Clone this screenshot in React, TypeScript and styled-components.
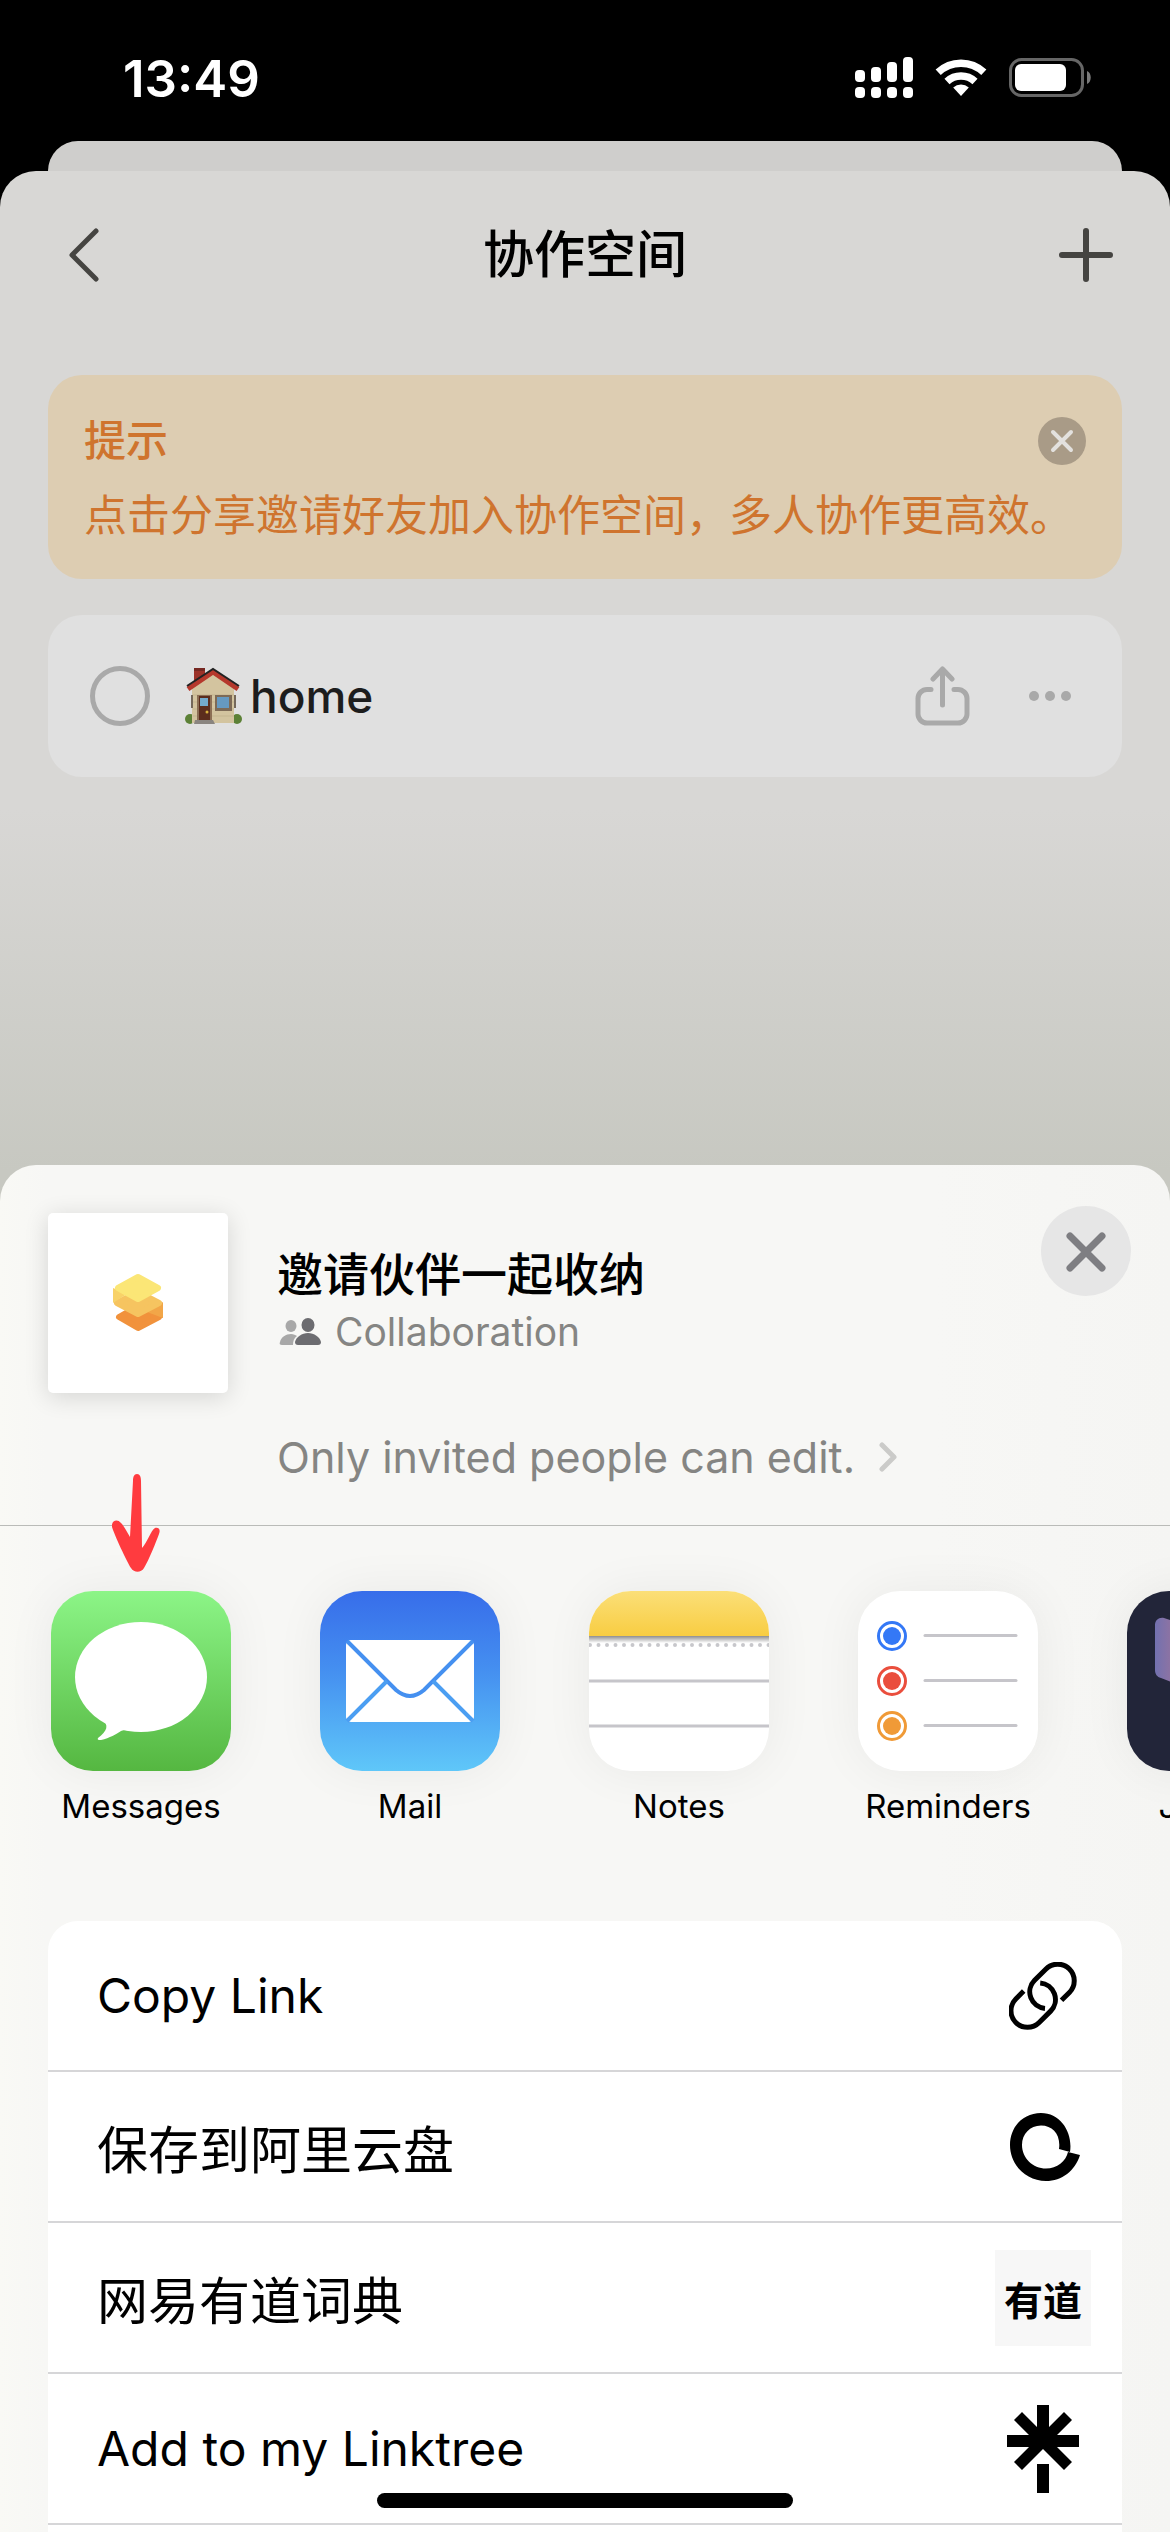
import React from 'react';
import styled, {createGlobalStyle} from "styled-components";

const App = () => {
    return (
        <>
            <GlobalStyle/>
            <Screen>
                <StatusBar>
                    <Time>13:49</Time>
                    <StatusIcons>
                        <SignalIcon/>
                        <WifiIcon/>
                        <BatteryIcon/>
                    </StatusIcons>
                </StatusBar>
                <BackCard/>
                <Workspace>
                    <Header>
                        <IconButton aria-label="Back">
                            <svg width="60" height="60" viewBox="0 0 60 60" fill="none" stroke="#454441" strokeWidth="5"
                                 strokeLinecap="round" strokeLinejoin="round">
                                <path d="M42 6 18 30l24 24"/>
                            </svg>
                        </IconButton>
                        <HeaderTitle>协作空间</HeaderTitle>
                        <IconButton aria-label="Add">
                            <svg width="60" height="60" viewBox="0 0 60 60" fill="none" stroke="#454441" strokeWidth="6"
                                 strokeLinecap="round">
                                <path d="M30 6v48M6 30h48"/>
                            </svg>
                        </IconButton>
                    </Header>
                    <Tip>
                        <TipTop>
                            <TipTitle>提示</TipTitle>
                            <TipClose aria-label="Close tip">
                                <svg width="48" height="48" viewBox="0 0 48 48" fill="none" stroke="#e3e1de"
                                     strokeWidth="4" strokeLinecap="round">
                                    <path d="m15 15 18 18M33 15 15 33"/>
                                </svg>
                            </TipClose>
                        </TipTop>
                        <TipText>点击分享邀请好友加入协作空间，多人协作更高效。</TipText>
                    </Tip>
                    <SpaceRow>
                        <SpaceLabel>
                            <SpaceCheck type="checkbox"/>
                            <HouseIcon/>
                            <span>home</span>
                        </SpaceLabel>
                        <SpaceActions>
                            <IconButton aria-label="Share">
                                <ShareIcon/>
                            </IconButton>
                            <IconButton aria-label="More">
                                <svg width="60" height="60" viewBox="0 0 60 60" fill="#a9a9a9">
                                    <circle cx="14" cy="30" r="5"/>
                                    <circle cx="30" cy="30" r="5"/>
                                    <circle cx="46" cy="30" r="5"/>
                                </svg>
                            </IconButton>
                        </SpaceActions>
                    </SpaceRow>
                </Workspace>

                <Sheet>
                    <SheetHeader>
                        <Thumb>
                            <LogoIcon/>
                        </Thumb>
                        <SheetInfo>
                            <SheetTitle>邀请伙伴一起收纳</SheetTitle>
                            <SheetSub>
                                <PeopleIcon/>
                                Collaboration
                            </SheetSub>
                            <PermissionButton>
                                Only invited people can edit.
                                <svg width="18" height="32" viewBox="0 0 18 32" fill="none" stroke="#cbcbc9"
                                     strokeWidth="5" strokeLinecap="round" strokeLinejoin="round">
                                    <path d="m3 4 12 12L3 28"/>
                                </svg>
                            </PermissionButton>
                        </SheetInfo>
                        <SheetClose aria-label="Close">
                            <svg width="90" height="90" viewBox="0 0 90 90" fill="none" stroke="#7e7e82" strokeWidth="7"
                                 strokeLinecap="round">
                                <path d="m29 30 32 32M61 30 29 62"/>
                            </svg>
                        </SheetClose>
                    </SheetHeader>

                    <Apps>
                        <AppItem>
                            <Pointer/>
                            <AppIcon $bg="linear-gradient(#8cf587, #55b741)"><MessagesArt/></AppIcon>
                            Messages
                        </AppItem>
                        <AppItem>
                            <AppIcon $bg="linear-gradient(#376dea, #4590f0 45%, #5fc7f9)"><MailArt/></AppIcon>
                            Mail
                        </AppItem>
                        <AppItem>
                            <AppIcon $bg="#fff"><NotesArt/></AppIcon>
                            Notes
                        </AppItem>
                        <AppItem>
                            <AppIcon $bg="#fff"><RemindersArt/></AppIcon>
                            Reminders
                        </AppItem>
                        <AppItem>
                            <AppIcon $bg="#222539"><JournalArt/></AppIcon>
                            Journal
                        </AppItem>
                    </Apps>

                    <Actions>
                        <ActionRow>
                            Copy Link
                            <ActionIcon>
                                <svg width="68" height="68" viewBox="0 0 68 68" fill="none" stroke="#000"
                                     strokeWidth="5">
                                    <path d="M52.5 38.3 60.4 30.4A16.5 16.5 0 0 0 37 7L25.6 18.3A16.5 16.5 0 0 0 36 46.4"/>
                                    <path d="M14.7 29.1 6.8 37A16.5 16.5 0 0 0 30.2 60.4L41.6 49.1A16.5 16.5 0 0 0 31.2 21"/>
                                </svg>
                            </ActionIcon>
                        </ActionRow>
                        <ActionRow $chinese>
                            保存到阿里云盘
                            <ActionIcon>
                                <svg width="72" height="72" viewBox="-1 0 72 72" overflow="visible">
                                    <path
                                        d="M62 41C65 22 53 2 33 2 15 2 2 16 2 34 2 54 18 70 38 70 54 70 67 60 72 44L60 41C58 50 49 57.500 38 57.500 25 57.500 14 47 14 34 14 23 22 14.500 33 14.500 45 14.500 53 24 51 38Z"/>
                                </svg>
                            </ActionIcon>
                        </ActionRow>
                        <ActionRow $chinese>
                            网易有道词典
                            <ActionIcon $filled>有道</ActionIcon>
                        </ActionRow>
                        <ActionRow>
                            Add to my Linktree
                            <ActionIcon>
                                <svg width="72" height="88" viewBox="0 0 72 88">
                                    <path
                                        d="M30 0h12v22l15-15 8 8-15 15h22v12H50l15 15-8 8-21-21-21 21-8-8 15-15H0V30h22L7 15l8-8 15 15zM30 59h12v29H30z"/>
                                </svg>
                            </ActionIcon>
                        </ActionRow>
                    </Actions>
                </Sheet>
                <HomeIndicator/>
            </Screen>
        </>
    );
};

export default App;

const SignalIcon = () => (
    <svg width="58" height="42" viewBox="0 0 58 42" fill="#fff">
        <rect x="0" y="13" width="10" height="12" rx="4"/>
        <rect x="16" y="10" width="10" height="15" rx="4"/>
        <rect x="32" y="5" width="10" height="20" rx="4"/>
        <rect x="48" y="0" width="10" height="25" rx="4"/>
        <rect x="0" y="30" width="10" height="11" rx="4"/>
        <rect x="16" y="30" width="10" height="11" rx="4"/>
        <rect x="32" y="30" width="10" height="11" rx="4"/>
        <rect x="48" y="30" width="10" height="11" rx="4"/>
    </svg>
);

const WifiIcon = () => (
    <svg width="52" height="38" viewBox="0 0 52 38" fill="none" stroke="#fff" strokeWidth="7.500">
        <path d="M3.200 13.200A33.200 33.200 0 0 1 48.800 13.200"/>
        <path d="M12 22.400A20.700 20.700 0 0 1 40 22.400"/>
        <path d="M18.200 28.600A11.500 11.500 0 0 1 33.800 28.600L26 37Z" fill="#fff" stroke="none"/>
    </svg>
);

const BatteryIcon = () => (
    <svg width="83" height="40" viewBox="0 0 83 40">
        <rect x="1.500" y="1.500" width="72" height="36" rx="11" fill="none" stroke="#666" strokeWidth="3"/>
        <rect x="6" y="6" width="51" height="27" rx="6" fill="#fff"/>
        <path d="M78 13c5 2 5 11 0 13z" fill="#7a7a7a"/>
    </svg>
);

const HouseIcon = () => (
    <svg width="57" height="58" viewBox="0 0 57 58">
        <path d="M9 1h11v14L9 24z" fill="#9c3229"/>
        <path d="M9 1h11v3H9z" fill="#762822"/>
        <circle cx="5" cy="52" r="5" fill="#5c8136"/>
        <circle cx="52" cy="52" r="5" fill="#5c8136"/>
        <path d="M28 4 7 21v35h42V21z" fill="#d3c49f"/>
        <path d="M8 28h41M8 35h41M8 42h41M8 49h41" stroke="#c4b58f" strokeWidth="1"/>
        <path d="M6 28h2v13H6zM49 28h2v13h-2z" fill="#74685a"/>
        <path d="M3 22 28 5l25 17" fill="none" stroke="#b5382c" strokeWidth="5"/>
        <path d="M2 19 28 2l26 17" fill="none" stroke="#222" strokeWidth="2"/>
        <path d="M12 28h15v26H12z" fill="#8c6f55"/>
        <path d="M14 29h11v24H14z" fill="#5c2d1d"/>
        <path d="M15 31h8v8h-8z" fill="#74aacb"/>
        <circle cx="22" cy="45" r="1.500" fill="#d7b13c"/>
        <path d="M30 28h17v16H30z" fill="#7d6a56"/>
        <path d="M32 30h12v11H32z" fill="#6699c0"/>
        <path d="M10 53h18l2 4H9z" fill="#8a8580"/>
    </svg>
);

const ShareIcon = () => (
    <svg width="60" height="60" viewBox="0 0 60 60" fill="none" stroke="#a9a9a9" strokeWidth="5" strokeLinecap="round"
         strokeLinejoin="round">
        <path d="M19 23.500h-4a9 9 0 0 0-9 9V48a9 9 0 0 0 9 9h31a9 9 0 0 0 9-9V32.500a9 9 0 0 0-9-9h-4"/>
        <path d="M30.500 39V4M21 13l9.500-10L40 13"/>
    </svg>
);

const LogoIcon = () => (
    <svg width="50" height="58" viewBox="0 0 50 58" strokeLinejoin="round" strokeWidth="6">
        <path d="M50 30v14L38 38z" fill="#f2a648"/>
        <path d="m6 43 19-11 21 11-21 11z" fill="#f1923c" stroke="#f1923c"/>
        <path d="m34 38 16-10v16z" fill="#f2a648"/>
        <path d="m4 29 21-11 21 11-21 11z" fill="#f6c460" stroke="#f6c460"/>
        <path d="M0 14v15l14-9z" fill="#f8d268"/>
        <path d="M5 14 25 3l20 11-20 11z" fill="#fbe676" stroke="#fbe676"/>
    </svg>
);

const PeopleIcon = () => (
    <svg width="44" height="30" viewBox="0 0 44 30">
        <ellipse cx="14" cy="9" rx="5.500" ry="6" fill="#a8a8a8"/>
        <path d="M5 28c-2 0-3-1-2-3 1-5 6-8 11-8 3 0 4 1 6 2-3 2-4 5-4 9z" fill="#a8a8a8"/>
        <ellipse cx="31" cy="8" rx="6.500" ry="7" fill="#6c6c70"/>
        <path d="M21 28c-2 0-3-1-3-3 1-5 7-9 13-9s12 4 13 9c0 2-1 3-3 3z" fill="#6c6c70"/>
    </svg>
);

const Pointer = () => (
    <PointerSvg width="48" height="100" viewBox="0 0 48 100" fill="#ff3b3f">
        <path
            d="M25 1C22 1 21 4 21 8L18 64C15 59 12 53 9 50 5 45-1 48 0 54 2 61 15 89 19 95 22 100 29 100 32 95 37 87 44 69 47 61 49 56 46 54 43 55 39 57 35 70 30 75L29 8C29 4 28 1 25 1Z"/>
    </PointerSvg>
);

const MessagesArt = () => (
    <svg viewBox="0 0 180 180" fill="#fff">
        <ellipse cx="90" cy="86" rx="66" ry="55"/>
        <path d="M50 128C59 134 56 140 47 147 46 149 48 149 50 149 59 147 65 143 70 140 72 139 74 139 80 140L84 120Z"/>
    </svg>
);

const MailArt = () => (
    <svg viewBox="0 0 180 180" fill="none">
        <rect x="26" y="49" width="128" height="82" rx="5" fill="#fff"/>
        <path d="M27 50 76 99Q90 111 104 99L153 50" stroke="#4590f0" strokeWidth="4"/>
        <path d="M67 90 27 130M113 90l40 40" stroke="#4b9ef2" strokeWidth="4"/>
    </svg>
);

const NotesArt = () => (
    <svg viewBox="0 0 180 180">
        <defs>
            <linearGradient id="notesTop" x2="0" y2="1">
                <stop stopColor="#fbdf78"/>
                <stop offset="1" stopColor="#f8cd42"/>
            </linearGradient>
            <linearGradient id="notesShade" x2="0" y2="1">
                <stop stopColor="#8f8f8f"/>
                <stop offset="1" stopColor="#fff"/>
            </linearGradient>
        </defs>
        <path d="M0 0h180v45H0z" fill="url(#notesTop)"/>
        <path d="M0 45h180v7H0z" fill="url(#notesShade)"/>
        <path d="M1 54h180" stroke="#c7c7cb" strokeWidth="4" strokeLinecap="round" strokeDasharray="0 8.500"/>
        <path d="M0 90h180M0 135h180" stroke="#c6c5ca" strokeWidth="3"/>
    </svg>
);

const RemindersArt = () => (
    <svg viewBox="0 0 180 180">
        {['#3478f6', '#ea4e3d', '#f09a37'].map((color, i) => (
            <g key={color}>
                <circle cx="34" cy={45 + i * 45} r="13.500" fill="none" stroke={color} strokeWidth="3"/>
                <circle cx="34" cy={45 + i * 45} r="9" fill={color}/>
                <path d={`M67 ${44.5 + i * 45}h91`} stroke="#c6c5ca" strokeWidth="3" strokeLinecap="round"/>
            </g>
        ))}
    </svg>
);

const JournalArt = () => (
    <svg viewBox="0 0 180 180">
        <defs>
            <linearGradient id="journalWing">
                <stop stopColor="#7271b0"/>
                <stop offset="1" stopColor="#d8797f"/>
            </linearGradient>
        </defs>
        <path d="M28 34c0-5 4-8 9-7l50 16v64L34 87c-4-1-6-4-6-8z" fill="url(#journalWing)"/>
        <path d="M152 34c0-5-4-8-9-7L93 43v64l53-20c4-1 6-4 6-8z" fill="#e0909a"/>
        <path d="M43 100c0-4 3-5 6-4l38 16v48l-38-8c-4-1-6-3-6-7z" fill="#7f86dd"/>
        <path d="M137 100c0-4-3-5-6-4l-38 16v48l38-8c4-1 6-3 6-7z" fill="#a58bd0"/>
    </svg>
);

const GlobalStyle = createGlobalStyle`
    * {
        box-sizing: border-box;
        margin: 0;
    }

    body {
        background: #000;
        font-family: Inter, "Noto Sans CJK SC", sans-serif;
        color: #000;
    }

    button {
        padding: 0;
        border: none;
        background: none;
        font: inherit;
        color: inherit;
    }

    svg {
        display: block;
        flex: none;
    }
`

const Screen = styled.div`
    display: flex;
    flex-direction: column;
    height: 100vh;
    overflow: hidden;
`

const StatusBar = styled.div`
    flex: none;
    display: flex;
    justify-content: space-between;
    align-items: center;
    height: 141px;
    padding: 15px 78px 0 123px;
    color: #fff;
`

const Time = styled.span`
    font-size: 51px;
    font-weight: 600;
`

const StatusIcons = styled.div`
    display: flex;
    align-items: center;
    gap: 22px;
`

const BackCard = styled.div`
    flex: none;
    height: 30px;
    margin: 0 48px;
    border-radius: 30px 30px 0 0;
    background: #cfcecc;
`

const Workspace = styled.main`
    flex: none;
    padding: 0 48px 424px;
    border-radius: 36px 36px 0 0;
    background: linear-gradient(#d8d7d5 62%, #c7c8c1 97%);
`

const Header = styled.header`
    display: flex;
    justify-content: space-between;
    align-items: center;
    height: 168px;
    padding: 0 6px;
`

const HeaderTitle = styled.h1`
    font-size: 51px;
    font-weight: 500;
    line-height: 60px;
`

const IconButton = styled.button`
    width: 60px;
    height: 60px;
`

const Tip = styled.section`
    margin-top: 36px;
    padding: 36px 36px 32px;
    border-radius: 34px;
    background: #ddcdb2;
    color: #cf742e;
`

const TipTop = styled.div`
    display: flex;
    justify-content: space-between;
    align-items: center;
    height: 60px;
`

const TipTitle = styled.h2`
    font-size: 42px;
    font-weight: 500;
    line-height: 60px;
`

const TipClose = styled.button`
    width: 48px;
    height: 48px;
    border-radius: 50%;
    background: #a99b87;
`

const TipText = styled.p`
    margin-top: 12px;
    font-size: 43px;
    line-height: 64px;
    white-space: nowrap;
`

const SpaceRow = styled.section`
    display: flex;
    justify-content: space-between;
    align-items: center;
    height: 162px;
    margin-top: 36px;
    padding: 0 42px;
    border-radius: 34px;
    background: #e0e0e0;
`

const SpaceLabel = styled.label`
    display: flex;
    align-items: center;
    font-size: 46px;
    font-weight: 500;
    color: #1d1d1d;

    svg {
        margin: 0 8px 0 35px;
    }
`

const SpaceCheck = styled.input`
    appearance: none;
    width: 60px;
    height: 60px;
    margin: 0;
    border: 5px solid #a9a9a9;
    border-radius: 50%;
`

const SpaceActions = styled.div`
    display: flex;
    gap: 48px;
`

const Sheet = styled.section`
    flex: 1;
    display: flex;
    flex-direction: column;
    margin-top: -36px;
    border-radius: 36px 36px 0 0;
    background: linear-gradient(90deg, #f9f9f5, #f7f7f5 4%, #f7f7f5 80%, #f5f5f3);
`

const SheetHeader = styled.header`
    flex: none;
    display: flex;
    align-items: flex-start;
    height: 361px;
    padding: 41px 39px 0 48px;
    border-bottom: 1px solid #babbb8;
`

const Thumb = styled.div`
    flex: none;
    display: flex;
    justify-content: center;
    align-items: center;
    width: 180px;
    height: 180px;
    margin-top: 7px;
    border-radius: 5px;
    background: #fff;
    box-shadow: 0 4px 24px rgba(0, 0, 0, 0.14);
`

const SheetInfo = styled.div`
    flex: 1;
    padding: 38px 0 0 49px;
    color: #858583;
`

const SheetTitle = styled.h2`
    font-size: 46px;
    font-weight: 500;
    line-height: 60px;
    color: #000;
`

const SheetSub = styled.p`
    display: flex;
    align-items: center;
    gap: 14px;
    font-size: 39px;
    line-height: 56px;
`

const PermissionButton = styled.button`
    display: flex;
    align-items: center;
    gap: 24px;
    margin-top: 67px;
    font-size: 43px;
    line-height: 60px;
`

const SheetClose = styled.button`
    flex: none;
    width: 90px;
    height: 90px;
    border-radius: 50%;
    background: #e6e6e6;
`

const Apps = styled.nav`
    flex: none;
    display: flex;
    gap: 89px;
    height: 395px;
    padding: 65px 0 0 51px;
`

const AppItem = styled.button`
    position: relative;
    flex: none;
    display: flex;
    flex-direction: column;
    align-items: center;
    gap: 15px;
    width: 180px;
    font-size: 33px;
    line-height: 40px;
`

const AppIcon = styled.span<{ $bg: string }>`
    flex: none;
    width: 180px;
    height: 180px;
    border-radius: 42px;
    overflow: hidden;
    background: ${props => props.$bg};
    box-shadow: 0 0 50px rgba(0, 0, 0, 0.06);
`

// sits above the first app and crosses the header line
const PointerSvg = styled.svg`
    position: absolute;
    top: -118px;
    left: 61px;
    z-index: 1;
`

const Actions = styled.div`
    flex: 1;
    margin: 0 48px;
    border-radius: 30px 30px 0 0;
    background: #fff;
`

const ActionRow = styled.button<{ $chinese?: boolean }>`
    display: flex;
    justify-content: space-between;
    align-items: center;
    width: 100%;
    height: 151px;
    padding: 0 31px 0 49px;
    border-bottom: 2px solid #d6d6d8;
    font-size: ${props => props.$chinese ? '51px' : '48px'};
    text-align: left;
`

const ActionIcon = styled.span<{ $filled?: boolean }>`
    display: flex;
    justify-content: center;
    align-items: center;
    width: 96px;
    height: 96px;
    background: ${props => props.$filled ? '#f7f7f7' : 'none'};
    font-size: 39px;
    font-weight: 700;
`

const HomeIndicator = styled.div`
    position: fixed;
    bottom: 24px;
    left: 50%;
    width: 416px;
    height: 15px;
    border-radius: 8px;
    background: #000;
    transform: translateX(-50%);
`
